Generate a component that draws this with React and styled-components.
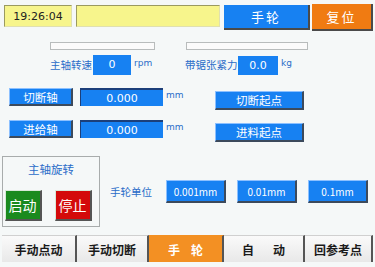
import styled, { createGlobalStyle } from "styled-components";

const Global = createGlobalStyle`
  body {
    margin: 0;
    background: #f5f8f8;
    font-family: "Noto Sans CJK SC", "Liberation Sans", sans-serif;
  }
`;

const Screen = styled.div`
  width: 375px;
  height: 267px;
  background: #f5f8f8;
  display: flex;
  flex-direction: column;
  overflow: hidden;
`;

const TopBar = styled.div`
  display: flex;
  align-items: flex-start;
  padding: 4px 0 0 4px;
  height: 30px;
  box-sizing: border-box;
`;

const YellowBox = styled.div`
  margin-top: 1px;
  width: ${(p) => p.w}px;
  height: 22px;
  margin-right: ${(p) => p.mr}px;
  background: #f7f58c;
  border: 1px solid #9a9a60;
  border-right-color: #e0e0b0;
  border-bottom-color: #e0e0b0;
  box-sizing: border-box;
  font-family: "DejaVu Sans", sans-serif;
  font-size: 11px;
  color: #222;
  display: flex;
  align-items: center;
  justify-content: center;
`;

const TopButton = styled.div`
  width: ${(p) => p.w}px;
  height: ${(p) => p.h}px;
  margin-top: ${(p) => p.mt}px;
  margin-right: ${(p) => p.mr}px;
  background: ${(p) => p.bg};
  border-bottom: 2px solid #4a4a4a;
  border-right: 2px solid #4a4a4a;
  box-sizing: border-box;
  color: #fff;
  font-size: 13px;
  letter-spacing: 2px;
  display: flex;
  align-items: center;
  justify-content: center;
`;

const BarRow = styled.div`
  display: flex;
  margin-top: 12px;
  padding-left: 50px;
  gap: 31px;
`;

const Bar = styled.div`
  width: ${(p) => p.w}px;
  height: 8px;
  background: #fbfbfb;
  border: 1px solid #b8bcbc;
  box-sizing: border-box;
`;

const ParamRow = styled.div`
  display: flex;
  align-items: center;
  margin-top: 4px;
  height: 21px;
  padding-left: 50px;
`;

const Label = styled.span`
  color: #2a6cc8;
  font-size: 10.5px;
  white-space: nowrap;
  flex-shrink: 0;
  width: ${(p) => (p.w ? `${p.w}px` : "auto")};
`;

const Unit = styled.span`
  color: #2a6cc8;
  font-family: "DejaVu Sans", sans-serif;
  font-size: 9px;
  width: ${(p) => p.w}px;
  flex-shrink: 0;
  padding-left: 3px;
  box-sizing: border-box;
  margin-top: -4px;
`;

const ValueBox = styled.div`
  width: ${(p) => p.w}px;
  height: ${(p) => p.h}px;
  flex-shrink: 0;
  margin-top: ${(p) => p.mt || 0}px;
  background: #1781f2;
  color: #fff;
  font-family: "DejaVu Sans", sans-serif;
  font-size: 11px;
  display: flex;
  align-items: center;
  justify-content: center;
  box-sizing: border-box;
  border-top: ${(p) => (p.framed ? "2px solid #1c3f7a" : "none")};
  border-left: ${(p) => (p.framed ? "1px solid #1c3f7a" : "none")};
`;

const AxisArea = styled.div`
  display: flex;
  margin-top: 13px;
`;

const AxisColumn = styled.div`
  display: flex;
  flex-direction: column;
  gap: 14px;
  padding-left: 9px;
  width: 206px;
`;

const AxisRow = styled.div`
  display: flex;
  align-items: center;
  height: 18px;
`;

const BlueButton = styled.div`
  width: ${(p) => p.w}px;
  height: ${(p) => p.h}px;
  flex-shrink: 0;
  margin-right: ${(p) => p.mr || 0}px;
  background: #1781f2;
  border-top: 1px solid #8cc0ff;
  border-left: 1px solid #8cc0ff;
  border-bottom: 2px solid #3c4a5c;
  border-right: 2px solid #3c4a5c;
  box-sizing: border-box;
  color: #fff;
  font-size: ${(p) => p.fs || 11.5}px;
  font-family: ${(p) =>
    p.mono ? '"Noto Sans CJK JP", "DejaVu Sans Mono", monospace' : "inherit"};
  display: flex;
  align-items: center;
  justify-content: center;
`;

const StartColumn = styled.div`
  display: flex;
  flex-direction: column;
  gap: 13px;
  padding-top: 3px;
`;

const Lower = styled.div`
  display: flex;
  margin-top: 14px;
  padding-left: 2px;
`;

const SpindleBox = styled.div`
  width: 98px;
  height: 71px;
  border: 1px solid #a8acac;
  box-sizing: border-box;
  display: flex;
  flex-direction: column;
  align-items: center;
`;

const BoxTitle = styled.div`
  color: #2a6cc8;
  font-size: 11.5px;
  margin-top: 4px;
  height: 16px;
  line-height: 16px;
`;

const BoxButtons = styled.div`
  display: flex;
  gap: 13px;
  margin-top: 13px;
  margin-left: -6px;
`;

const RunButton = styled.div`
  width: 37px;
  height: 31px;
  background: ${(p) => p.bg};
  border-top: 1px solid #d8e8d8;
  border-left: 1px solid #d8e8d8;
  border-bottom: 2px solid #555;
  border-right: 2px solid #555;
  box-sizing: border-box;
  color: #fff;
  font-size: 14px;
  display: flex;
  align-items: center;
  justify-content: center;
`;

const UnitArea = styled.div`
  display: flex;
  align-items: center;
  margin-left: 10px;
  margin-top: 24px;
  height: 23px;
`;

const Tabs = styled.div`
  display: flex;
  margin-top: auto;
  margin-bottom: 5px;
  padding-left: 2px;
  height: 27px;
`;

const Tab = styled.div`
  width: ${(p) => p.w}px;
  background: ${(p) =>
    p.active ? "#f39023" : "linear-gradient(#fafafa, #e8e8e8)"};
  border-right: 2px solid #555;
  border-top: 1px solid ${(p) => (p.active ? "#f39023" : "#d0d0d0")};
  box-sizing: border-box;
  color: ${(p) => (p.active ? "#fff" : "#1a1a1a")};
  font-weight: 700;
  font-size: 12px;
  display: flex;
  align-items: center;
  justify-content: center;
  white-space: pre;
`;

const tabs = [
  { text: "手动点动", w: 75 },
  { text: "手动切断", w: 72 },
  { text: "手    轮", w: 75, active: true },
  { text: "自       动", w: 81 },
  { text: "回参考点", w: 68 },
];

export default function App() {
  return (
    <>
      <Global />
      <Screen>
        <TopBar>
          <YellowBox w={68} mr={4}>19:26:04</YellowBox>
          <YellowBox w={144} mr={4} />
          <TopButton w={86} h={25} mt={1} mr={2} bg="#1781f2">
            手轮
          </TopButton>
          <TopButton w={61} h={27} mt={0} mr={0} bg="#f07b12">
            复位
          </TopButton>
        </TopBar>

        <BarRow>
          <Bar w={105} />
          <Bar w={122} />
        </BarRow>

        <ParamRow>
          <Label w={43}>主轴转速</Label>
          <ValueBox w={38} h={20}>0</ValueBox>
          <Unit w={54}>rpm</Unit>
          <Label w={53}>带锯张紧力</Label>
          <ValueBox w={40} h={19} mt={2}>0.0</ValueBox>
          <Unit w={20}>kg</Unit>
        </ParamRow>

        <AxisArea>
          <AxisColumn>
            <AxisRow>
              <BlueButton w={64} h={18} mr={7}>切断轴</BlueButton>
              <ValueBox w={83} h={18} framed>0.000</ValueBox>
              <Unit w={20}>mm</Unit>
            </AxisRow>
            <AxisRow>
              <BlueButton w={64} h={18} mr={7}>进给轴</BlueButton>
              <ValueBox w={83} h={18} framed>0.000</ValueBox>
              <Unit w={20}>mm</Unit>
            </AxisRow>
          </AxisColumn>
          <StartColumn>
            <BlueButton w={89} h={19}>切断起点</BlueButton>
            <BlueButton w={89} h={19}>进料起点</BlueButton>
          </StartColumn>
        </AxisArea>

        <Lower>
          <SpindleBox>
            <BoxTitle>主轴旋转</BoxTitle>
            <BoxButtons>
              <RunButton bg="#1a8a1e">启动</RunButton>
              <RunButton bg="#d40a0a">停止</RunButton>
            </BoxButtons>
          </SpindleBox>
          <UnitArea>
            <Label w={56}>手轮单位</Label>
            <BlueButton w={60} h={23} mr={11} mono fs={10}>0.001mm</BlueButton>
            <BlueButton w={60} h={23} mr={11} mono fs={10}>0.01mm</BlueButton>
            <BlueButton w={60} h={23} mono fs={10}>0.1mm</BlueButton>
          </UnitArea>
        </Lower>

        <Tabs>
          {tabs.map((t) => (
            <Tab key={t.text} w={t.w} active={t.active}>
              {t.text}
            </Tab>
          ))}
        </Tabs>
      </Screen>
    </>
  );
}
